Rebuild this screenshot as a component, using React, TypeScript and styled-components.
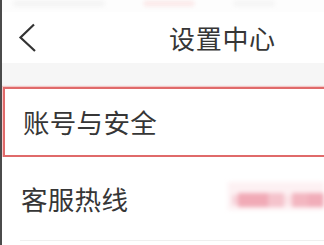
import React from "react";
import styled, { createGlobalStyle } from "styled-components";

const Global = createGlobalStyle`
  html, body { margin: 0; padding: 0; background: #ffffff; }
  body { font-family: "Noto Sans CJK SC", "Noto Sans", sans-serif; overflow: hidden; }
`;

const Page = styled.div`
  width: 324px;
  height: 245px;
  box-sizing: border-box;
  border-left: 2px solid #4b4b4b;
  display: flex;
  flex-direction: column;
  overflow: hidden;
  background: #ffffff;
`;

const StatusBar = styled.div`
  height: 12px;
  flex: none;
  display: flex;
  align-items: flex-start;
  gap: 40px;
  padding: 1px 10px 0 12px;
  box-sizing: border-box;
  background: #fdfdfd;
`;

const Smudge = styled.div<{ $width: number; $color: string }>`
  height: 5px;
  flex: none;
  width: ${(p) => p.$width}px;
  background: ${(p) => p.$color};
  filter: blur(2px);
`;

const Header = styled.div`
  height: 51px;
  flex: none;
  display: flex;
  align-items: center;
  background: #ffffff;
`;

const Back = styled.div`
  width: 167px;
  padding-left: 16px;
  box-sizing: border-box;
  display: flex;
  align-items: center;
`;

const Title = styled.div`
  font-size: 26px;
  color: #363636;
  line-height: 30px;
  letter-spacing: 0.7px;
`;

const Band = styled.div`
  height: 24px;
  flex: none;
  background: #f6f6f6;
`;

const ActiveRow = styled.div`
  height: 70px;
  flex: none;
  box-sizing: border-box;
  display: flex;
  align-items: center;
  padding-left: 18px;
  margin-left: 1px;
  margin-right: -10px;
  border: 2px solid #e06a6a;
  box-shadow: 0 0 1px 1px rgba(240, 150, 150, 0.5);
  background: #ffffff;
`;

const PlainRow = styled.div`
  height: 84px;
  flex: none;
  display: flex;
  background: #ffffff;
`;

const RowInner = styled.div`
  flex: 1;
  margin-left: 18px;
  padding-left: 1px;
  display: flex;
  align-items: center;
  border-bottom: 1px solid #efefef;
`;

const Label = styled.span`
  font-size: 26.5px;
  color: #363636;
  line-height: 30px;
  letter-spacing: 0.3px;
`;

const Blur = styled.div`
  margin-left: auto;
  align-self: flex-start;
  margin-top: 25px;
  width: 96px;
  height: 28px;
  display: flex;
  align-items: center;
  padding: 0 0 0 4px;
  box-sizing: border-box;
  background: #fdf1f3;
  filter: blur(2px);
`;

const Block = styled.div<{ $w: number; $h: number; $c: string }>`
  flex: none;
  width: ${(p) => p.$w}px;
  height: ${(p) => p.$h}px;
  margin-top: 8px;
  background: ${(p) => p.$c};
`;

export default function App() {
  return (
    <>
      <Global />
      <Page>
        <StatusBar>
          <Smudge $width={90} $color="#f2f2f2" />
          <Smudge $width={50} $color="#fbe6e6" />
          <Smudge $width={40} $color="#f3f3f3" />
        </StatusBar>
        <Header>
          <Back>
            <svg width="20" height="30" viewBox="0 0 20 30">
              <path d="M16 1.5 L2.5 14.5 L17 28" fill="none" stroke="#333" strokeWidth="2.2" />
            </svg>
          </Back>
          <Title>设置中心</Title>
        </Header>
        <Band />
        <ActiveRow>
          <Label>账号与安全</Label>
        </ActiveRow>
        <PlainRow>
          <RowInner>
            <Label>客服热线</Label>
            <Blur>
              <Block $w={6} $h={10} $c="#f7d3da" />
              <Block $w={30} $h={14} $c="#f1aab6" />
              <Block $w={16} $h={14} $c="#f5c3cc" />
              <Block $w={8} $h={10} $c="#fbe3e7" />
              <Block $w={16} $h={14} $c="#f3b6c0" />
              <Block $w={16} $h={14} $c="#f1adb9" />
            </Blur>
          </RowInner>
        </PlainRow>
      </Page>
    </>
  );
}
